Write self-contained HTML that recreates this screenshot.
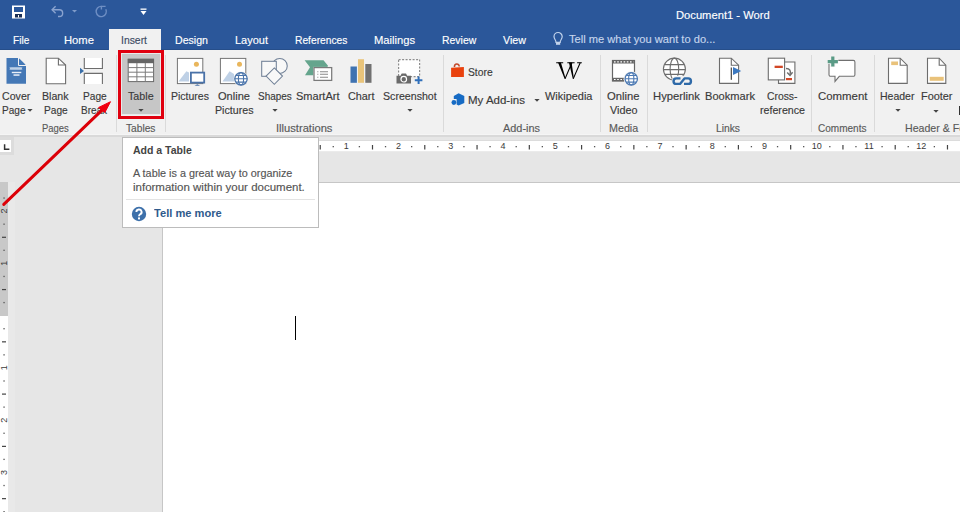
<!DOCTYPE html>
<html><head><meta charset="utf-8"><style>
html,body{margin:0;padding:0;}
body{width:960px;height:512px;overflow:hidden;position:relative;background:#e6e6e6;font-family:"Liberation Sans",sans-serif;}
.t{position:absolute;white-space:nowrap;line-height:1;-webkit-text-stroke:0.15px currentColor;}
svg{overflow:visible}
</style></head><body>
<div style="position:absolute;left:0px;top:0px;width:960px;height:50px;background:#2b579a;"></div>
<div style="position:absolute;left:0px;top:49px;width:108px;height:1px;background:#264e8a;"></div>
<div style="position:absolute;left:161px;top:49px;width:799px;height:1px;background:#264e8a;"></div>
<div style="position:absolute;left:109px;top:29px;width:52px;height:21px;background:#f1f1f1;"></div>
<div class="t" style="left:676.25px;top:9.85px;font-size:11.40px;color:#ffffff;transform:scaleX(0.9821);transform-origin:0 0;">Document1 - Word</div>
<div class="t" style="left:12.50px;top:34.65px;font-size:11.40px;color:#ffffff;transform:scaleX(0.8846);transform-origin:0 0;">File</div>
<div class="t" style="left:63.75px;top:34.65px;font-size:11.40px;color:#ffffff;transform:scaleX(0.9865);transform-origin:0 0;">Home</div>
<div class="t" style="left:121.00px;top:34.65px;font-size:11.40px;color:#3c4b63;transform:scaleX(0.9119);transform-origin:0 0;">Insert</div>
<div class="t" style="left:174.50px;top:34.65px;font-size:11.40px;color:#ffffff;transform:scaleX(0.9299);transform-origin:0 0;">Design</div>
<div class="t" style="left:234.50px;top:34.65px;font-size:11.40px;color:#ffffff;transform:scaleX(0.9641);transform-origin:0 0;">Layout</div>
<div class="t" style="left:294.50px;top:34.65px;font-size:11.40px;color:#ffffff;transform:scaleX(0.9006);transform-origin:0 0;">References</div>
<div class="t" style="left:373.75px;top:34.65px;font-size:11.40px;color:#ffffff;transform:scaleX(0.9865);transform-origin:0 0;">Mailings</div>
<div class="t" style="left:442.00px;top:34.65px;font-size:11.40px;color:#ffffff;transform:scaleX(0.9163);transform-origin:0 0;">Review</div>
<div class="t" style="left:502.50px;top:34.65px;font-size:11.40px;color:#ffffff;transform:scaleX(0.9386);transform-origin:0 0;">View</div>
<div class="t" style="left:568.50px;top:34.02px;font-size:11.20px;color:#c5d5ec;transform:scaleX(0.9929);transform-origin:0 0;">Tell me what you want to do...</div>
<div style="position:absolute;left:0px;top:50px;width:960px;height:85px;background:#f1f1f1;"></div>
<div style="position:absolute;left:0px;top:134px;width:960px;height:1px;background:#f5f5f5;"></div>
<div style="position:absolute;left:0px;top:135px;width:960px;height:2px;background:#d9d9d9;"></div>
<div style="position:absolute;left:0px;top:137px;width:960px;height:375px;background:#e6e6e6;"></div>
<div style="position:absolute;left:121px;top:53px;width:40px;height:62px;background:#e9e9e9;"></div>
<div style="position:absolute;left:122px;top:54px;width:38px;height:60px;background:#c6c6c6;"></div>
<div class="t" style="left:2.25px;top:90.77px;font-size:10.90px;color:#3a3a3a;transform:scaleX(0.9750);transform-origin:0 0;">Cover</div>
<div class="t" style="left:1.50px;top:105.37px;font-size:10.90px;color:#3a3a3a;transform:scaleX(0.9231);transform-origin:0 0;">Page</div>
<div class="t" style="left:41.90px;top:90.77px;font-size:10.90px;color:#3a3a3a;transform:scaleX(0.9756);transform-origin:0 0;">Blank</div>
<div class="t" style="left:43.75px;top:105.37px;font-size:10.90px;color:#3a3a3a;transform:scaleX(0.9330);transform-origin:0 0;">Page</div>
<div class="t" style="left:82.50px;top:90.77px;font-size:10.90px;color:#3a3a3a;transform:scaleX(0.9330);transform-origin:0 0;">Page</div>
<div class="t" style="left:81.00px;top:105.37px;font-size:10.90px;color:#3a3a3a;transform:scaleX(0.9131);transform-origin:0 0;">Break</div>
<div class="t" style="left:41.90px;top:123.80px;font-size:10.40px;color:#5a5a5a;transform:scaleX(0.9105);transform-origin:0 0;">Pages</div>
<div class="t" style="left:128.40px;top:90.77px;font-size:10.90px;color:#3a3a3a;transform:scaleX(0.9824);transform-origin:0 0;">Table</div>
<div class="t" style="left:126.00px;top:123.80px;font-size:10.40px;color:#5a5a5a;transform:scaleX(0.9813);transform-origin:0 0;">Tables</div>
<div class="t" style="left:171.25px;top:90.77px;font-size:10.90px;color:#3a3a3a;transform:scaleX(0.9651);transform-origin:0 0;">Pictures</div>
<div class="t" style="left:218.00px;top:90.77px;font-size:10.90px;color:#3a3a3a;transform:scaleX(1.0156);transform-origin:0 0;">Online</div>
<div class="t" style="left:214.50px;top:105.37px;font-size:10.90px;color:#3a3a3a;transform:scaleX(0.9778);transform-origin:0 0;">Pictures</div>
<div class="t" style="left:257.50px;top:90.77px;font-size:10.90px;color:#3a3a3a;transform:scaleX(0.9129);transform-origin:0 0;">Shapes</div>
<div class="t" style="left:296.00px;top:90.77px;font-size:10.90px;color:#3a3a3a;transform:scaleX(1.0117);transform-origin:0 0;">SmartArt</div>
<div class="t" style="left:348.00px;top:90.77px;font-size:10.90px;color:#3a3a3a;transform:scaleX(0.9942);transform-origin:0 0;">Chart</div>
<div class="t" style="left:382.50px;top:90.77px;font-size:10.90px;color:#3a3a3a;transform:scaleX(0.9748);transform-origin:0 0;">Screenshot</div>
<div class="t" style="left:275.50px;top:123.80px;font-size:10.40px;color:#5a5a5a;transform:scaleX(1.0742);transform-origin:0 0;">Illustrations</div>
<div class="t" style="left:467.75px;top:66.77px;font-size:10.90px;color:#3a3a3a;transform:scaleX(0.9462);transform-origin:0 0;">Store</div>
<div class="t" style="left:467.75px;top:94.87px;font-size:10.90px;color:#3a3a3a;transform:scaleX(1.0563);transform-origin:0 0;">My Add-ins</div>
<div class="t" style="left:545.00px;top:90.77px;font-size:10.90px;color:#3a3a3a;transform:scaleX(1.0053);transform-origin:0 0;">Wikipedia</div>
<div class="t" style="left:502.50px;top:123.80px;font-size:10.40px;color:#5a5a5a;transform:scaleX(1.0493);transform-origin:0 0;">Add-ins</div>
<div class="t" style="left:607.00px;top:90.77px;font-size:10.90px;color:#3a3a3a;transform:scaleX(1.0315);transform-origin:0 0;">Online</div>
<div class="t" style="left:610.00px;top:105.37px;font-size:10.90px;color:#3a3a3a;transform:scaleX(0.9934);transform-origin:0 0;">Video</div>
<div class="t" style="left:608.75px;top:123.80px;font-size:10.40px;color:#5a5a5a;transform:scaleX(1.0326);transform-origin:0 0;">Media</div>
<div class="t" style="left:653.00px;top:90.77px;font-size:10.90px;color:#3a3a3a;transform:scaleX(1.0345);transform-origin:0 0;">Hyperlink</div>
<div class="t" style="left:704.50px;top:90.77px;font-size:10.90px;color:#3a3a3a;transform:scaleX(1.0190);transform-origin:0 0;">Bookmark</div>
<div class="t" style="left:767.00px;top:90.77px;font-size:10.90px;color:#3a3a3a;transform:scaleX(0.9503);transform-origin:0 0;">Cross-</div>
<div class="t" style="left:759.50px;top:105.37px;font-size:10.90px;color:#3a3a3a;transform:scaleX(0.9772);transform-origin:0 0;">reference</div>
<div class="t" style="left:716.00px;top:123.80px;font-size:10.40px;color:#5a5a5a;transform:scaleX(0.9885);transform-origin:0 0;">Links</div>
<div class="t" style="left:817.50px;top:90.77px;font-size:10.90px;color:#3a3a3a;transform:scaleX(1.0477);transform-origin:0 0;">Comment</div>
<div class="t" style="left:817.50px;top:123.80px;font-size:10.40px;color:#5a5a5a;transform:scaleX(0.9646);transform-origin:0 0;">Comments</div>
<div class="t" style="left:880.00px;top:90.77px;font-size:10.90px;color:#3a3a3a;transform:scaleX(0.9650);transform-origin:0 0;">Header</div>
<div class="t" style="left:921.00px;top:90.77px;font-size:10.90px;color:#3a3a3a;">Footer</div>
<div class="t" style="left:904.50px;top:123.80px;font-size:10.40px;color:#5a5a5a;transform:scaleX(1.0192);transform-origin:0 0;">Header &amp; Footer</div>
<div style="position:absolute;left:116px;top:55px;width:1px;height:77px;background:#dadada;"></div>
<div style="position:absolute;left:165px;top:55px;width:1px;height:77px;background:#dadada;"></div>
<div style="position:absolute;left:443px;top:55px;width:1px;height:77px;background:#dadada;"></div>
<div style="position:absolute;left:600px;top:55px;width:1px;height:77px;background:#dadada;"></div>
<div style="position:absolute;left:647px;top:55px;width:1px;height:77px;background:#dadada;"></div>
<div style="position:absolute;left:811px;top:55px;width:1px;height:77px;background:#dadada;"></div>
<div style="position:absolute;left:874px;top:55px;width:1px;height:77px;background:#dadada;"></div>
<svg style="position:absolute;left:27px;top:108px;" width="6" height="4" viewBox="0 0 6 4"><path d="M0.4 1 L5.6 1 L3 3.8 Z" fill="#444"/></svg>
<svg style="position:absolute;left:137.7px;top:108px;" width="6" height="4" viewBox="0 0 6 4"><path d="M0.4 1 L5.6 1 L3 3.8 Z" fill="#444"/></svg>
<svg style="position:absolute;left:271.5px;top:108px;" width="6" height="4" viewBox="0 0 6 4"><path d="M0.4 1 L5.6 1 L3 3.8 Z" fill="#444"/></svg>
<svg style="position:absolute;left:406.5px;top:108px;" width="6" height="4" viewBox="0 0 6 4"><path d="M0.4 1 L5.6 1 L3 3.8 Z" fill="#444"/></svg>
<svg style="position:absolute;left:533.8px;top:98px;" width="6" height="4" viewBox="0 0 6 4"><path d="M0.4 1 L5.6 1 L3 3.8 Z" fill="#444"/></svg>
<svg style="position:absolute;left:894.5px;top:108px;" width="6" height="4" viewBox="0 0 6 4"><path d="M0.4 1 L5.6 1 L3 3.8 Z" fill="#444"/></svg>
<svg style="position:absolute;left:933px;top:108.5px;" width="6" height="4" viewBox="0 0 6 4"><path d="M0.4 1 L5.6 1 L3 3.8 Z" fill="#444"/></svg>
<div style="position:absolute;left:958.5px;top:106px;width:1.5px;height:8.5px;background:#333;"></div>
<svg style="position:absolute;left:11px;top:5px;" width="15" height="14" viewBox="0 0 15 14"><rect x="1" y="0.5" width="13" height="13" fill="#fff"/><rect x="3" y="2" width="9" height="5" fill="#2b579a"/><rect x="4" y="9" width="7" height="3.5" fill="#1b2f55"/><rect x="7" y="10" width="1" height="2.5" fill="#fff"/></svg>
<svg style="position:absolute;left:50px;top:4px;" width="16" height="14" viewBox="0 0 16 14"><path d="M2.2 5.8 H9.3 A3.35 3.35 0 0 1 9.3 12.5 H8" stroke="#8aa3cf" stroke-width="1.4" fill="none"/><path d="M5.6 2.3 L2.1 5.8 L5.6 9.3" stroke="#8aa3cf" stroke-width="1.4" fill="none"/></svg>
<svg style="position:absolute;left:72px;top:10px;" width="6" height="3" viewBox="0 0 6 3"><path d="M0 0 H5 L2.5 2.5Z" fill="#7f9bc9"/></svg>
<svg style="position:absolute;left:94px;top:4px;" width="15" height="15" viewBox="0 0 15 15"><path d="M11.8 5.2 A5.1 5.1 0 1 1 7.4 2.4" stroke="#6f8fc4" stroke-width="1.4" fill="none"/><path d="M7.4 5.4 V2.4 H11.6" stroke="#6f8fc4" stroke-width="1.4" fill="none"/></svg>
<svg style="position:absolute;left:140px;top:8px;" width="7" height="8" viewBox="0 0 7 8"><rect x="0.5" y="0.5" width="6" height="1.3" fill="#fff"/><path d="M0.5 3 H6.5 L3.5 7Z" fill="#fff"/></svg>
<svg style="position:absolute;left:552px;top:31px;" width="12" height="15" viewBox="0 0 12 15"><path d="M4 11.3 C4 9 2 8 2 5.6 A4.1 4.1 0 0 1 10.2 5.6 C10.2 8 8.2 9 8.2 11.3 Z" stroke="#c2d3ec" stroke-width="1.2" fill="none"/><rect x="4" y="11.8" width="4.2" height="2" fill="#c2d3ec"/></svg>
<svg style="position:absolute;left:6px;top:57px;" width="21" height="27" viewBox="0 0 21 27"><path d="M0.5 1 H12.5 L20 8.5 V26.7 H0.5 Z" fill="#4478b6"/><path d="M12.5 1 V8.5 H20" stroke="#f1f1f1" stroke-width="1" fill="none"/><path d="M13.2 1.5 V7.8 H19.5 Z" fill="#4478b6"/><path d="M3.9 10.3 l1 2.4 l1 -2.4 l1 2.4 l1 -2.4 l1 2.4 l1 -2.4 l1 2.4 l1 -2.4 l1 2.4 l1 -2.4 l1 2.4 l1 -2.4 M3.9 12.7 l1 -2.4 l1 2.4 l1 -2.4 l1 2.4 l1 -2.4 l1 2.4 l1 -2.4 l1 2.4 l1 -2.4 l1 2.4 l1 -2.4 l1 2.4" stroke="#d6e1f0" stroke-width="0.65" fill="none"/><rect x="5.8" y="14.8" width="9.5" height="1.4" fill="#e8eef7"/><rect x="7.5" y="17.3" width="6" height="1.5" fill="#e8eef7"/></svg>
<svg style="position:absolute;left:45px;top:57px;" width="22" height="28" viewBox="0 0 22 28"><path d="M1.2 1.2 H13.4 L20.6 8 V26.7 H1.2 Z" fill="#fff" stroke="#6d6d6d" stroke-width="1.1"/><path d="M13.4 1.2 V8 H20.6" fill="none" stroke="#6d6d6d" stroke-width="1.1"/></svg>
<svg style="position:absolute;left:79px;top:57px;" width="25" height="28" viewBox="0 0 25 28"><path d="M5.3 1 V11.5 H23.4 V1" fill="#fff" stroke="#6d6d6d" stroke-width="1.1"/><path d="M5.3 27 V16.4 H23.4 V27" fill="#fff" stroke="#6d6d6d" stroke-width="1.1"/><path d="M1 10.7 L5 14 L1 17 Z" fill="#3a6ea8"/></svg>
<svg style="position:absolute;left:127px;top:58px;" width="28" height="25" viewBox="0 0 28 25"><rect x="1.2" y="1.2" width="25.4" height="22.4" fill="#fff" stroke="#6a6a6a" stroke-width="1"/><rect x="0.8" y="0.9" width="26.2" height="4.3" fill="#666"/><path d="M1.2 9.6 H26.6 M1.2 14.2 H26.6 M1.2 18.8 H26.6 M9.9 5 V23.6 M18.3 5 V23.6" stroke="#7c7c7c" stroke-width="1" fill="none"/></svg>
<svg style="position:absolute;left:176px;top:57px;" width="30" height="30" viewBox="0 0 30 30"><rect x="1.4" y="1.4" width="25.4" height="25.2" fill="#fff" stroke="#747474" stroke-width="1"/><circle cx="20.4" cy="7.2" r="2.5" fill="#e9b65c"/><path d="M2.5 24.5 L10.4 14.3 L13 15.5 V24.5 Z" fill="#bfd1e6"/><rect x="14.9" y="15.6" width="13.3" height="10" fill="#fff" stroke="#4a72a8" stroke-width="1.8"/><path d="M18.5 28.7 L21.3 27.2 L24.2 28.7 Z" fill="#4a72a8"/></svg>
<svg style="position:absolute;left:219px;top:57px;" width="30" height="30" viewBox="0 0 30 30"><rect x="1.4" y="1.4" width="25.4" height="25.2" fill="#fff" stroke="#747474" stroke-width="1"/><circle cx="20.5" cy="7.2" r="2.5" fill="#e9b65c"/><path d="M3.5 24.5 L10.6 14.3 L15 17 V24.5 Z" fill="#bfd1e6"/><circle cx="22" cy="21.8" r="7.3" fill="#f1f1f1"/><circle cx="22" cy="21.8" r="6.2" fill="#fff" stroke="#4a74aa" stroke-width="1.3"/><ellipse cx="22" cy="21.8" rx="2.6" ry="6.2" fill="none" stroke="#4a74aa" stroke-width="1.1"/><path d="M15.8 21.8 H28.2 M17 18.5 H27 M17 25.1 H27" stroke="#4a74aa" stroke-width="1.1"/></svg>
<svg style="position:absolute;left:258px;top:55px;" width="33" height="30" viewBox="0 0 33 30"><circle cx="21.75" cy="10.9" r="7.5" fill="#f8f8f8" stroke="#718197" stroke-width="1.05"/><rect x="3.7" y="6.3" width="14.6" height="15" fill="#f8f8f8" stroke="#718197" stroke-width="1.05"/><path d="M16.3 12.9 L24.5 21.1 L16.3 29.3 L8.1 21.1 Z" fill="#f8f8f8" stroke="#718197" stroke-width="1.05"/></svg>
<svg style="position:absolute;left:303px;top:58px;" width="31" height="25" viewBox="0 0 31 25"><path d="M1.6 2.2 H20.5 L25 7.8 L21 17.2 H2 L7 9.2 Z" fill="#65a58d"/><rect x="10.3" y="8.9" width="19" height="14.2" fill="#f4f4f4"/><rect x="11" y="9.6" width="17.7" height="12.8" fill="#fff" stroke="#7a7a7a" stroke-width="1.25"/><path d="M14.2 13.7 H15.4 M14.2 16.3 H15.4 M14.2 19.2 H15.4" stroke="#999" stroke-width="1.1"/><path d="M17 13.7 H25 M17 16.3 H25 M17 19.2 H25" stroke="#8a8a8a" stroke-width="1.1"/></svg>
<svg style="position:absolute;left:350px;top:58px;" width="23" height="25" viewBox="0 0 23 25"><rect x="0.5" y="8.5" width="6.4" height="16.3" fill="#3f73b1"/><rect x="8" y="1.2" width="6" height="23.6" fill="#e9c47a"/><rect x="15.3" y="6" width="6.2" height="18.8" fill="#717171"/></svg>
<svg style="position:absolute;left:395px;top:58px;" width="29" height="28" viewBox="0 0 29 28"><rect x="3.6" y="1.6" width="21" height="17" fill="#fff" stroke="#8d8d8d" stroke-width="1.2" stroke-dasharray="2 1.5"/><path d="M1.5 17.8 H5.5 L6.7 15.5 H11 L12.2 17.8 H16 V25.6 H1.5 Z" fill="#6a6a6a"/><circle cx="8.75" cy="21.2" r="2.8" fill="none" stroke="#fff" stroke-width="1.2"/><path d="M23.6 18.5 V26 M19.8 22.2 H27.4" stroke="#2f6fba" stroke-width="2"/></svg>
<svg style="position:absolute;left:450px;top:62px;" width="16" height="17" viewBox="0 0 16 17"><path d="M4.4 4.9 C4.4 1.2 9.2 1 9.2 4.6" stroke="#c24a2c" stroke-width="1.5" fill="none"/><path d="M1.1 5.7 L13.9 4.9 V14.9 L1.1 14.9 Z" fill="#e9420e"/></svg>
<svg style="position:absolute;left:451px;top:92px;" width="15" height="15" viewBox="0 0 15 15"><path d="M7.6 1.3 L13.3 4 V11 L7.6 13.4 L5.6 12.5 V7 H2.8 V4 Z" fill="#176bc4"/><circle cx="2.9" cy="10.5" r="2.4" fill="#176bc4"/></svg>
<svg style="position:absolute;left:555px;top:61px;" width="28" height="19" viewBox="0 0 28 19"><path d="M3 1.6 L5.9 1.6 L10.7 17.8 L9.6 17.8 Z M13.9 1.6 L16.6 1.6 L18.9 17.8 L17.8 17.8 Z" fill="#000"/><path d="M10.1 17.6 L16.9 1.8 M18.3 17.6 L25.2 1.8" stroke="#000" stroke-width="1.1"/><path d="M1.2 1.7 H8.2 M12.3 1.7 H19.6 M22.1 1.7 H26.8" stroke="#000" stroke-width="1.1"/></svg>
<svg style="position:absolute;left:611px;top:59px;" width="30" height="28" viewBox="0 0 30 28"><rect x="1.5" y="1.5" width="22" height="20.5" fill="#fff" stroke="#666" stroke-width="1.2"/><rect x="1.5" y="1.2" width="22" height="3.3" fill="#666"/><rect x="1.5" y="18.8" width="22" height="3.3" fill="#666"/><path d="M3 2.85 H22.5 M3 20.45 H22.5" stroke="#fff" stroke-width="1.1" stroke-dasharray="1.6 1.6"/><circle cx="20.25" cy="19.8" r="7.6" fill="#f1f1f1"/><circle cx="20.25" cy="19.8" r="6.2" fill="#fff" stroke="#4d7ab3" stroke-width="1.3"/><ellipse cx="20.25" cy="19.8" rx="2.6" ry="6.2" fill="none" stroke="#4d7ab3" stroke-width="1.1"/><path d="M14 19.8 H26.5 M15.2 16.5 H25.3 M15.2 23.1 H25.3" stroke="#4d7ab3" stroke-width="1.1"/></svg>
<svg style="position:absolute;left:661px;top:56px;" width="33" height="32" viewBox="0 0 33 32"><circle cx="13.4" cy="13.1" r="11" fill="#fff" stroke="#6d6d6d" stroke-width="1.1"/><ellipse cx="13.4" cy="13.1" rx="4.3" ry="11" fill="none" stroke="#6d6d6d" stroke-width="1.1"/><path d="M2.4 13.6 H24.4 M3.8 8.6 H23 M3.8 18.4 H23" stroke="#6d6d6d" stroke-width="1.1"/><rect x="10.5" y="19.8" width="22" height="10.8" rx="5.4" fill="#f1f1f1"/><path d="M19.5 22.4 H15.3 A2.75 2.75 0 0 0 15.3 27.9 H19 L23.5 22.4 H27.2 A2.75 2.75 0 0 1 27.2 27.9 H23" stroke="#2f6aa8" stroke-width="2.4" fill="none" stroke-linejoin="round"/></svg>
<svg style="position:absolute;left:718px;top:57px;" width="25" height="28" viewBox="0 0 25 28"><path d="M1.5 1.2 H13.3 L20.6 8.2 V26.4 H1.5 Z" fill="#fff" stroke="#6d6d6d" stroke-width="1.1"/><path d="M13.3 1.2 V8.2 H20.6" fill="none" stroke="#6d6d6d" stroke-width="1.1"/><rect x="12.7" y="10.5" width="1.3" height="12.3" fill="#555"/><path d="M15 10 L23.2 14 L15 18 Z" fill="#3b78c0"/></svg>
<svg style="position:absolute;left:767px;top:57px;" width="30" height="28" viewBox="0 0 30 28"><path d="M11.5 5 H27.9 V26.4 H11.5 Z" fill="#fff" stroke="#6d6d6d" stroke-width="1.1"/><rect x="1.3" y="1.2" width="16.3" height="21.7" fill="#fff" stroke="#6d6d6d" stroke-width="1.1"/><rect x="7.6" y="8.7" width="8.2" height="2.3" fill="#d24726"/><rect x="19" y="21" width="6" height="2.2" fill="#d24726"/><path d="M19 11.5 C23 11.5 24 14 23 17.5" stroke="#6d6d6d" stroke-width="1.4" fill="none"/><path d="M20.2 15.5 L23 18.5 L25.6 15.2" stroke="#6d6d6d" stroke-width="1.4" fill="none"/></svg>
<svg style="position:absolute;left:825px;top:55px;" width="32" height="29" viewBox="0 0 32 29"><path d="M5 5.4 H28.3 A1.6 1.6 0 0 1 29.9 7 V19.7 A1.6 1.6 0 0 1 28.3 21.3 H14.3 L10 26.4 V21.3 H5.6 A1.6 1.6 0 0 1 4 19.7 V7 Z" fill="#fff" stroke="#707070" stroke-width="1.1"/><path d="M7.8 0.9 V12 M2.3 6.5 H13.3" stroke="#f1f1f1" stroke-width="5"/><path d="M7.8 1.5 V11.5 M2.7 6.6 H12.9" stroke="#5a9b86" stroke-width="3.2"/></svg>
<svg style="position:absolute;left:887px;top:57px;" width="22" height="28" viewBox="0 0 22 28"><path d="M1.5 1.2 H13.2 L20.2 8.2 V26.4 H1.5 Z" fill="#fff" stroke="#6d6d6d" stroke-width="1.1"/><path d="M13.2 1.2 V8.2 H20.2" fill="none" stroke="#6d6d6d" stroke-width="1.1"/><rect x="4.2" y="4.5" width="6.8" height="3.6" fill="#e9c27a"/></svg>
<svg style="position:absolute;left:926px;top:57px;" width="22" height="28" viewBox="0 0 22 28"><path d="M1.5 1.2 H13.2 L19.8 8.2 V26.4 H1.5 Z" fill="#fff" stroke="#6d6d6d" stroke-width="1.1"/><path d="M13.2 1.2 V8.2 H19.8" fill="none" stroke="#6d6d6d" stroke-width="1.1"/><rect x="3.7" y="19.8" width="14" height="4" fill="#e9c27a"/></svg>
<div style="position:absolute;left:163px;top:140px;width:797px;height:1px;background:#dcdcdc;"></div>
<div style="position:absolute;left:163px;top:141px;width:797px;height:10px;background:#ffffff;"></div>
<div style="position:absolute;left:163px;top:141px;width:131px;height:10px;background:#c8c8c8;"></div>
<div style="position:absolute;left:163px;top:151px;width:797px;height:1px;background:#ebebeb;"></div>
<div style="position:absolute;left:0px;top:137px;width:14px;height:18px;background:#dcdcdc;"></div>
<div style="position:absolute;left:0px;top:140px;width:11px;height:12px;background:#ffffff;"></div>
<svg style="position:absolute;left:3px;top:144px;" width="7" height="7" viewBox="0 0 7 7"><path d="M1.6 0.3 V5.3 H6.4" stroke="#333" stroke-width="1.5" fill="none"/></svg>
<div style="position:absolute;left:8px;top:182px;width:7px;height:330px;background:#e9e9e9;"></div>
<div style="position:absolute;left:0px;top:182px;width:8px;height:134px;background:#c8c8c8;"></div>
<div style="position:absolute;left:0px;top:316px;width:8px;height:196px;background:#ffffff;"></div>
<svg style="position:absolute;left:0px;top:0px;font-family:"Liberation Sans",sans-serif;" width="960" height="512" viewBox="0 0 960 512"><rect x="254.20" y="146" width="1.3" height="1.3" fill="#555"/><rect x="267.37" y="145" width="1.2" height="4.5" fill="#444"/><rect x="280.33" y="146" width="1.3" height="1.3" fill="#555"/><rect x="306.47" y="146" width="1.3" height="1.3" fill="#555"/><rect x="319.63" y="145" width="1.2" height="4.5" fill="#444"/><rect x="332.60" y="146" width="1.3" height="1.3" fill="#555"/><text x="346.27" y="149.4" text-anchor="middle" font-size="9" fill="#3a3a3a">1</text><rect x="358.74" y="146" width="1.3" height="1.3" fill="#555"/><rect x="371.90" y="145" width="1.2" height="4.5" fill="#444"/><rect x="384.87" y="146" width="1.3" height="1.3" fill="#555"/><text x="398.54" y="149.4" text-anchor="middle" font-size="9" fill="#3a3a3a">2</text><rect x="411.01" y="146" width="1.3" height="1.3" fill="#555"/><rect x="424.18" y="145" width="1.2" height="4.5" fill="#444"/><rect x="437.14" y="146" width="1.3" height="1.3" fill="#555"/><text x="450.81" y="149.4" text-anchor="middle" font-size="9" fill="#3a3a3a">3</text><rect x="463.28" y="146" width="1.3" height="1.3" fill="#555"/><rect x="476.45" y="145" width="1.2" height="4.5" fill="#444"/><rect x="489.41" y="146" width="1.3" height="1.3" fill="#555"/><text x="503.08" y="149.4" text-anchor="middle" font-size="9" fill="#3a3a3a">4</text><rect x="515.55" y="146" width="1.3" height="1.3" fill="#555"/><rect x="528.72" y="145" width="1.2" height="4.5" fill="#444"/><rect x="541.68" y="146" width="1.3" height="1.3" fill="#555"/><text x="555.35" y="149.4" text-anchor="middle" font-size="9" fill="#3a3a3a">5</text><rect x="567.82" y="146" width="1.3" height="1.3" fill="#555"/><rect x="580.99" y="145" width="1.2" height="4.5" fill="#444"/><rect x="593.95" y="146" width="1.3" height="1.3" fill="#555"/><text x="607.62" y="149.4" text-anchor="middle" font-size="9" fill="#3a3a3a">6</text><rect x="620.09" y="146" width="1.3" height="1.3" fill="#555"/><rect x="633.25" y="145" width="1.2" height="4.5" fill="#444"/><rect x="646.22" y="146" width="1.3" height="1.3" fill="#555"/><text x="659.89" y="149.4" text-anchor="middle" font-size="9" fill="#3a3a3a">7</text><rect x="672.36" y="146" width="1.3" height="1.3" fill="#555"/><rect x="685.53" y="145" width="1.2" height="4.5" fill="#444"/><rect x="698.49" y="146" width="1.3" height="1.3" fill="#555"/><text x="712.16" y="149.4" text-anchor="middle" font-size="9" fill="#3a3a3a">8</text><rect x="724.63" y="146" width="1.3" height="1.3" fill="#555"/><rect x="737.80" y="145" width="1.2" height="4.5" fill="#444"/><rect x="750.76" y="146" width="1.3" height="1.3" fill="#555"/><text x="764.43" y="149.4" text-anchor="middle" font-size="9" fill="#3a3a3a">9</text><rect x="776.90" y="146" width="1.3" height="1.3" fill="#555"/><rect x="790.07" y="145" width="1.2" height="4.5" fill="#444"/><rect x="803.03" y="146" width="1.3" height="1.3" fill="#555"/><text x="816.70" y="149.4" text-anchor="middle" font-size="9" fill="#3a3a3a">10</text><rect x="829.17" y="146" width="1.3" height="1.3" fill="#555"/><rect x="842.34" y="145" width="1.2" height="4.5" fill="#444"/><rect x="855.30" y="146" width="1.3" height="1.3" fill="#555"/><text x="868.97" y="149.4" text-anchor="middle" font-size="9" fill="#3a3a3a">11</text><rect x="881.44" y="146" width="1.3" height="1.3" fill="#555"/><rect x="894.61" y="145" width="1.2" height="4.5" fill="#444"/><rect x="907.57" y="146" width="1.3" height="1.3" fill="#555"/><text x="921.24" y="149.4" text-anchor="middle" font-size="9" fill="#3a3a3a">12</text><rect x="933.71" y="146" width="1.3" height="1.3" fill="#555"/><rect x="946.88" y="145" width="1.2" height="4.5" fill="#444"/></svg>
<svg style="position:absolute;left:0px;top:0px;font-family:"Liberation Sans",sans-serif;" width="960" height="512" viewBox="0 0 960 512"><rect x="3.4" y="197.39" width="1.3" height="1.3" fill="#555"/><text transform="translate(7.4 211.06) rotate(-90)" x="0" y="0" text-anchor="middle" font-size="9" fill="#3a3a3a">2</text><rect x="3.4" y="223.53" width="1.3" height="1.3" fill="#555"/><rect x="2" y="236.70" width="4" height="1.2" fill="#444"/><rect x="3.4" y="249.66" width="1.3" height="1.3" fill="#555"/><text transform="translate(7.4 263.33) rotate(-90)" x="0" y="0" text-anchor="middle" font-size="9" fill="#3a3a3a">1</text><rect x="3.4" y="275.80" width="1.3" height="1.3" fill="#555"/><rect x="2" y="288.97" width="4" height="1.2" fill="#444"/><rect x="3.4" y="301.93" width="1.3" height="1.3" fill="#555"/><rect x="3.4" y="328.07" width="1.3" height="1.3" fill="#555"/><rect x="2" y="341.24" width="4" height="1.2" fill="#444"/><rect x="3.4" y="354.20" width="1.3" height="1.3" fill="#555"/><text transform="translate(7.4 367.87) rotate(-90)" x="0" y="0" text-anchor="middle" font-size="9" fill="#3a3a3a">1</text><rect x="3.4" y="380.34" width="1.3" height="1.3" fill="#555"/><rect x="2" y="393.50" width="4" height="1.2" fill="#444"/><rect x="3.4" y="406.47" width="1.3" height="1.3" fill="#555"/><text transform="translate(7.4 420.14) rotate(-90)" x="0" y="0" text-anchor="middle" font-size="9" fill="#3a3a3a">2</text><rect x="3.4" y="432.61" width="1.3" height="1.3" fill="#555"/><rect x="2" y="445.78" width="4" height="1.2" fill="#444"/><rect x="3.4" y="458.74" width="1.3" height="1.3" fill="#555"/><text transform="translate(7.4 472.41) rotate(-90)" x="0" y="0" text-anchor="middle" font-size="9" fill="#3a3a3a">3</text><rect x="3.4" y="484.88" width="1.3" height="1.3" fill="#555"/><rect x="2" y="498.05" width="4" height="1.2" fill="#444"/><rect x="3.4" y="511.01" width="1.3" height="1.3" fill="#555"/></svg>
<div style="position:absolute;left:162px;top:182px;width:798px;height:330px;background:#c6c6c6;"></div>
<div style="position:absolute;left:163px;top:183px;width:797px;height:329px;background:#ffffff;"></div>
<div style="position:absolute;left:295px;top:316px;width:1px;height:24px;background:#000000;"></div>
<div style="position:absolute;left:122px;top:137px;width:195px;height:89px;background:#fff;border:1px solid #bcbcbc;"></div>
<div class="t" style="left:133.10px;top:144.61px;font-size:10.80px;color:#444;font-weight:bold;transform:scaleX(0.9734);transform-origin:0 0;-webkit-text-stroke:0;">Add a Table</div>
<div class="t" style="left:133.10px;top:167.93px;font-size:10.60px;color:#555;transform:scaleX(1.0208);transform-origin:0 0;">A table is a great way to organize</div>
<div class="t" style="left:133.10px;top:181.63px;font-size:10.60px;color:#555;transform:scaleX(1.0846);transform-origin:0 0;">information within your document.</div>
<div style="position:absolute;left:126px;top:199px;width:189px;height:1px;background:#e3e3e3;"></div>
<svg style="position:absolute;left:131px;top:206px;" width="16" height="16" viewBox="0 0 16 16"><circle cx="8" cy="8" r="7.2" fill="#3d70aa"/><path d="M5.4 6 A2.6 2.5 0 1 1 9.2 8.2 C8.2 8.8 8 9.3 8 10.3" stroke="#fff" stroke-width="1.9" fill="none"/><rect x="7" y="11.4" width="2" height="2" fill="#fff"/></svg>
<div class="t" style="left:153.50px;top:208.19px;font-size:11.00px;color:#2f5a8c;font-weight:bold;transform:scaleX(1.0106);transform-origin:0 0;-webkit-text-stroke:0;">Tell me more</div>
<svg style="position:absolute;left:0px;top:0px;" width="960" height="512" viewBox="0 0 960 512"><line x1="3.75" y1="204.4" x2="102.5" y2="109.6" stroke="#dc0008" stroke-width="3" stroke-linecap="round"/><path d="M110.5 101.7 L98.6 107.5 L104.9 112.4 Z" fill="#f00010" stroke="#f00010" stroke-width="1" stroke-linejoin="round"/></svg>
<div style="position:absolute;left:118px;top:50px;width:40px;height:62.5px;border:3px solid #e0000f;"></div>
</body></html>
